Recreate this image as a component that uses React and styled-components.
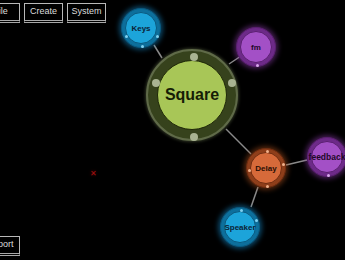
import React from "react"
import styled, { createGlobalStyle } from "styled-components"

const GlobalStyle = createGlobalStyle`
  html, body {
    margin: 0;
    padding: 0;
    background: #000;
  }
  body {
    font-family: "Liberation Sans", Arial, sans-serif;
  }
`

const Stage = styled.div`
  position: relative;
  width: 345px;
  height: 260px;
  overflow: hidden;
  background: #000;
  display: flex;
  flex-direction: column;
  justify-content: space-between;
`

const Toolbar = styled.div`
  display: flex;
  gap: 4px;
  padding-top: 3px;
  margin-left: -19px;
  position: relative;
  z-index: 2;
`

const BottomBar = styled(Toolbar)`
  padding-top: 0;
  padding-bottom: 4px;
`

const MenuButton = styled.button`
  box-sizing: border-box;
  width: 39px;
  height: 20px;
  padding: 0 0 1px;
  background: #000;
  color: #dcdcdc;
  border: 1px solid #b8b8b8;
  border-bottom: 3px double #a8a8a8;
  font-family: "Liberation Sans", Arial, sans-serif;
  font-size: 9px;
  line-height: 1;
  cursor: pointer;
`

const Edges = styled.svg`
  position: absolute;
  left: 0;
  top: 0;
  width: 345px;
  height: 260px;
  z-index: 0;
`

const NodeRing = styled.div`
  position: absolute;
  box-sizing: border-box;
  left: ${p => p.$x - p.$r}px;
  top: ${p => p.$y - p.$r}px;
  width: ${p => p.$r * 2}px;
  height: ${p => p.$r * 2}px;
  border-radius: 50%;
  background: ${p => p.$ring};
  border: ${p => p.$edge};
  box-shadow: ${p => p.$glow};
  display: flex;
  align-items: center;
  justify-content: center;
  z-index: 1;
`

const NodeFace = styled.div`
  box-sizing: border-box;
  width: ${p => p.$d}px;
  height: ${p => p.$d}px;
  border-radius: 50%;
  background: ${p => p.$fill};
  border: 1px solid ${p => p.$line};
  display: flex;
  align-items: center;
  justify-content: center;
  color: ${p => p.$text};
  font-family: "Liberation Sans", Arial, sans-serif;
  font-weight: 700;
  font-size: ${p => p.$fs}px;
  white-space: nowrap;
`

const Dot = styled.span`
  position: absolute;
  width: ${p => p.$s}px;
  height: ${p => p.$s}px;
  margin: ${p => -p.$s / 2}px 0 0 ${p => -p.$s / 2}px;
  border-radius: 50%;
  background: ${p => p.$c};
`

const Cross = styled.span`
  position: absolute;
  left: 90px;
  top: 169px;
  color: #a01010;
  font-family: "Liberation Sans", Arial, sans-serif;
  font-size: 8px;
  text-shadow: 0 0 3px #600;
`

const palette = {
  blue: {
    ring: "#0d6f9c",
    fill: "#1ca4da",
    line: "#0a5a80",
    text: "#0b2236",
    dot: "#7fd0f0",
    glow: "0 0 5px 2px rgba(20,130,190,0.55)",
  },
  purple: {
    ring: "#6d2a88",
    fill: "#a350c6",
    line: "#5a2070",
    text: "#1e0828",
    dot: "#d8a8ec",
    glow: "0 0 5px 2px rgba(140,60,170,0.5)",
  },
  orange: {
    ring: "#8e3e1a",
    fill: "#d66a3a",
    line: "#6e2c10",
    text: "#2a0e04",
    dot: "#f0b08a",
    glow: "0 0 5px 2px rgba(170,80,30,0.5)",
  },
}

const nodes = [
  { label: "Keys", x: 141, y: 28, color: "blue", dots: [27, 90, 153] },
  { label: "fm", x: 256, y: 47, color: "purple", dots: [90] },
  { label: "Delay", x: 266, y: 168, color: "orange", dots: [-90, 175, -15, 90] },
  { label: "feedback", x: 327, y: 157, color: "purple", dots: [90], fs: 8.5 },
  { label: "Speaker", x: 240, y: 227, color: "blue", dots: [-90, -25] },
]

const edges = [
  [154, 45, 162, 58],
  [229, 64, 241, 56],
  [226, 129, 251, 154],
  [286, 165, 307, 160],
  [258, 187, 251, 207],
]

function dotAt(r, deg) {
  const a = (deg * Math.PI) / 180
  return { left: r + Math.cos(a) * (r - 2.5), top: r + Math.sin(a) * (r - 2.5) }
}

function SmallNode({ label, x, y, color, dots, fs = 8 }) {
  const c = palette[color]
  const r = 20
  return (
    <NodeRing
      $x={x}
      $y={y}
      $r={r}
      $ring={c.ring}
      $edge={`1px solid ${c.line}`}
      $glow={c.glow}
    >
      <NodeFace $d={32} $fill={c.fill} $line={c.line} $text={c.text} $fs={fs}>
        {label}
      </NodeFace>
      {dots.map(d => (
        <Dot key={d} $s={3} $c={c.dot} style={dotAt(r, d)} />
      ))}
    </NodeRing>
  )
}

function SquareNode() {
  const r = 46
  const ringDot = deg => {
    const a = (deg * Math.PI) / 180
    return { left: r + Math.cos(a) * 40, top: r + Math.sin(a) * 40 }
  }
  return (
    <NodeRing
      $x={192}
      $y={95}
      $r={r}
      $ring="#36421c"
      $edge="2px solid #5f6a48"
      $glow="0 0 3px 1px rgba(80,90,60,0.6)"
    >
      <NodeFace
        $d={70}
        $fill="#a8c657"
        $line="#1f2808"
        $text="#161d06"
        $fs={16}
      >
        Square
      </NodeFace>
      {[-90, -160, -20, 90].map(d => (
        <Dot key={d} $s={8} $c="#a9b392" style={ringDot(d)} />
      ))}
    </NodeRing>
  )
}

export default function App() {
  return (
    <Stage>
      <GlobalStyle />
      <Edges viewBox="0 0 345 260">
        {edges.map(([x1, y1, x2, y2], i) => (
          <line
            key={i}
            x1={x1}
            y1={y1}
            x2={x2}
            y2={y2}
            stroke="#8a8a8a"
            strokeWidth="1.5"
          />
        ))}
      </Edges>
      <Toolbar>
        <MenuButton>File</MenuButton>
        <MenuButton>Create</MenuButton>
        <MenuButton>System</MenuButton>
      </Toolbar>
      <SquareNode />
      {nodes.map(n => (
        <SmallNode key={n.label} {...n} />
      ))}
      <Cross>✕</Cross>
      <BottomBar>
        <MenuButton>Export</MenuButton>
      </BottomBar>
    </Stage>
  )
}
